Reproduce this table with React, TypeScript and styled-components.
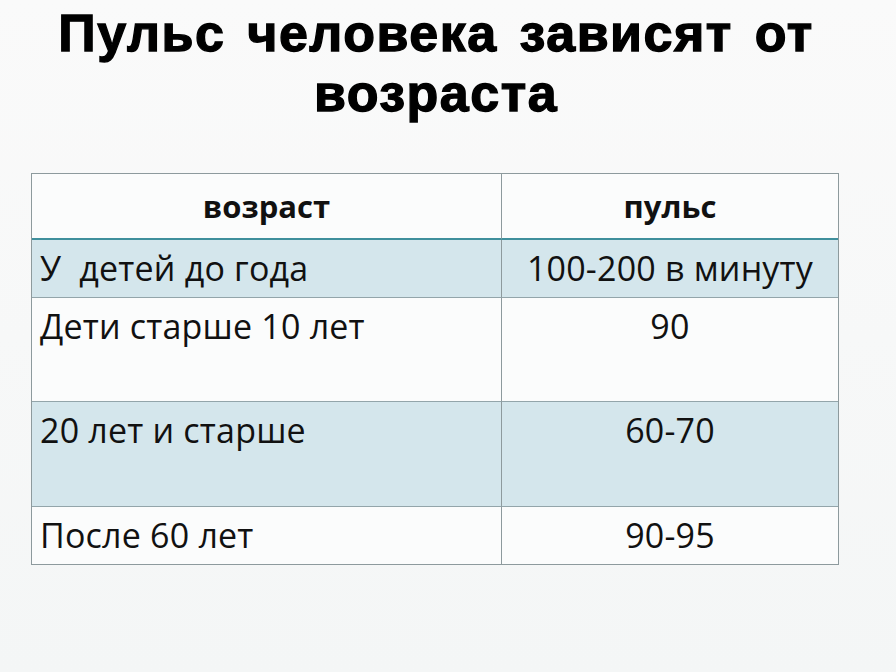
import React from "react";
import styled, { createGlobalStyle } from "styled-components";

const GlobalStyle = createGlobalStyle`
  html, body {
    margin: 0;
    padding: 0;
    background: #f6f7f7;
  }
  body {
    width: 896px;
    height: 672px;
    overflow: hidden;
  }
`;

const Page = styled.div`
  width: 896px;
  height: 672px;
  display: flex;
  flex-direction: column;
  align-items: flex-start;
  background: linear-gradient(180deg, #fafafa 0%, #f4f6f6 100%);
`;

const Title = styled.h1`
  margin: 0;
  padding-top: 3px;
  width: 872px;
  text-align: center;
  font-family: "Liberation Sans", Arial, sans-serif;
  font-weight: 700;
  font-size: 52px;
  line-height: 60px;
  letter-spacing: 1.5px;
  word-spacing: 6px;
  color: #000;
  -webkit-text-stroke: 1.3px #000;
`;

const Table = styled.div`
  margin: 50px 0 0 31px;
  width: 808px;
  display: grid;
  grid-template-columns: 470px 1fr;
  grid-template-rows: 66px 58px 104px 105px 57px;
  border: 1.5px solid #8d9a9d;
  box-sizing: border-box;
  font-family: "Open Sans", "Noto Sans", sans-serif;
  color: #111;
`;

const Cell = styled.div<{ $tint?: boolean; $center?: boolean; $last?: boolean; $right?: boolean }>`
  display: flex;
  align-items: flex-start;
  justify-content: ${({ $center }) => ($center ? "center" : "flex-start")};
  padding: 5px 0 0 ${({ $center }) => ($center ? "0" : "8px")};
  font-size: 34px;
  line-height: 46px;
  letter-spacing: 0.2px;
  white-space: pre;
  background: ${({ $tint }) => ($tint ? "#d4e6ec" : "#fbfcfc")};
  border-bottom: ${({ $last }) => ($last ? "none" : "1.5px solid #93a5aa")};
  border-right: ${({ $right }) => ($right ? "1.5px solid #8d9a9d" : "none")};
`;

const HeadCell = styled.div<{ $right?: boolean }>`
  display: flex;
  align-items: center;
  justify-content: center;
  font-size: 31px;
  font-weight: 700;
  background: #fbfcfc;
  border-bottom: 2.5px solid #3f8f9c;
  border-right: ${({ $right }) => ($right ? "1.5px solid #8d9a9d" : "none")};
`;

const rows = [
  { age: "У  детей до года", pulse: "100-200 в минуту" },
  { age: "Дети старше 10 лет", pulse: "90" },
  { age: "20 лет и старше", pulse: "60-70" },
  { age: "После 60 лет", pulse: "90-95" },
];

export default function App() {
  return (
    <Page>
      <GlobalStyle />
      <Title>
        Пульс человека зависят от
        <br />
        возраста
      </Title>
      <Table>
        <HeadCell $right>возраст</HeadCell>
        <HeadCell>пульс</HeadCell>
        {rows.map((r, i) => (
          <React.Fragment key={r.age}>
            <Cell $tint={i % 2 === 0} $right $last={i === rows.length - 1}>
              {r.age}
            </Cell>
            <Cell $tint={i % 2 === 0} $center $last={i === rows.length - 1}>
              {r.pulse}
            </Cell>
          </React.Fragment>
        ))}
      </Table>
    </Page>
  );
}
